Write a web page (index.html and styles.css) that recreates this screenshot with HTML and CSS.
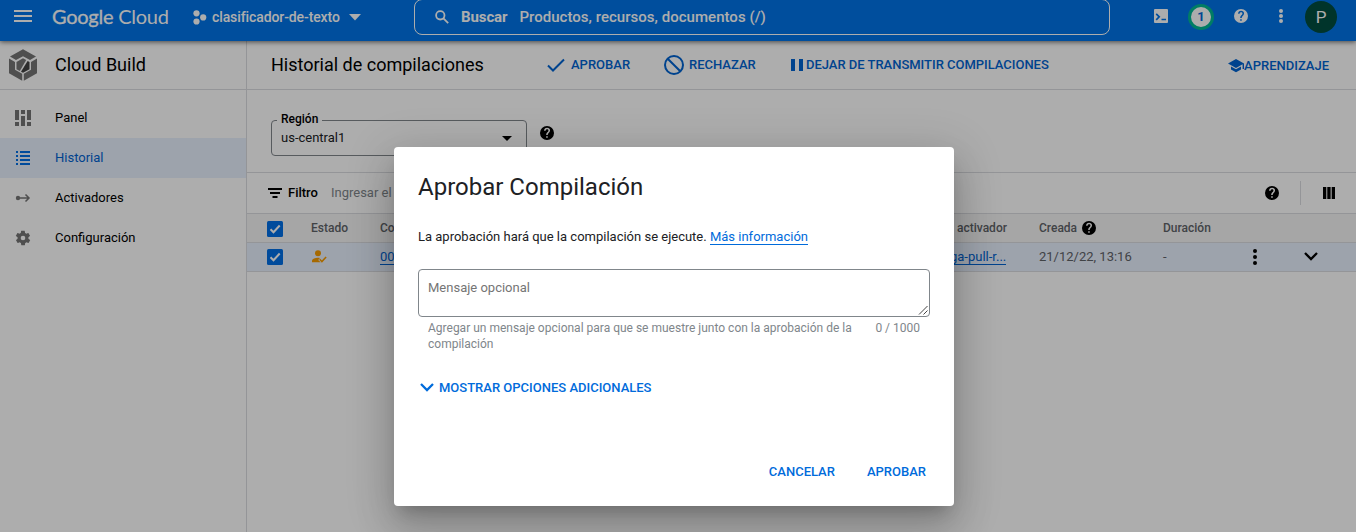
FILE: index.html
```html
<!DOCTYPE html>
<html lang="es">
<head>
<meta charset="utf-8">
<title>Cloud Build</title>
<link rel="stylesheet" href="styles.css">
</head>
<body>
<svg class="defs" width="0" height="0">
  <symbol id="help" viewBox="0 0 24 24"><path d="M12 0a12 12 0 1 0 0 24 12 12 0 0 0 0-24zm1.300 20.200h-2.700v-2.700h2.700zm2.400-9.200c-1.400 1.400-2.400 2.300-2.400 4.500h-2.700c0-3 1-4 2.600-5.400.9-.8 1.300-1.300 1.300-2.200 0-1.400-1-2.300-2.400-2.300S9.700 6.600 9.700 8.100H7c0-2.900 2.100-4.900 5.100-4.900s5.100 1.900 5.100 4.500c0 1.400-.6 2.400-1.500 3.300z"/></symbol>
  <symbol id="tick" viewBox="0 0 16 16"><rect width="16" height="16" rx="1.500" fill="#006fe6"/><path d="M3.500 8.200l3 3 6.200-6.700" fill="none" stroke="#fff" stroke-width="2"/></symbol>
  <symbol id="down" viewBox="0 0 14 9"><path d="M1 1l6 6 6-6" fill="none" stroke="currentColor" stroke-width="2.300"/></symbol>
</svg>
<div class="app">
  <header class="top">
    <svg class="menu" width="18" height="12"><path d="M0 1h18M0 6h18M0 11h18" stroke="#fff" stroke-width="2"/></svg>
    <div class="brand"><span class="g">Google</span> <span class="c">Cloud</span></div>
    <div class="project">
      <svg width="14" height="15"><g fill="#fff"><circle cx="3.500" cy="3.300" r="3.100"/><circle cx="3.500" cy="11.500" r="3.100"/><circle cx="10.200" cy="7.400" r="3.100"/></g></svg>
      <span>clasificador-de-texto</span>
      <svg class="caret" width="12" height="7"><path d="M0 0h12L6 6.500z" fill="#fff"/></svg>
    </div>
    <div class="search">
      <svg width="14" height="14" viewBox="0 0 14 14"><g fill="none" stroke="#fff" stroke-width="1.800"><circle cx="5.300" cy="5.300" r="4.200"/><path d="M8.400 8.400l4.800 4.800"/></g></svg>
      <b>Buscar</b><span>Productos, recursos, documentos (/)</span>
    </div>
    <div class="tools">
      <svg width="14" height="14"><rect width="14" height="14" rx="1" fill="#fff"/><path d="M2.200 4.800L5.200 7.800l-3 3M7.500 10.500h4.500" fill="none" stroke="#0074e8" stroke-width="1.700"/></svg>
      <span class="count">1</span>
      <svg class="h" width="14" height="14" fill="#fff"><use href="#help"/></svg>
      <svg class="dots" width="4" height="14" fill="#fff"><circle cx="2" cy="2" r="2"/><circle cx="2" cy="7" r="2"/><circle cx="2" cy="12" r="2"/></svg>
      <span class="avatar">P</span>
    </div>
  </header>
  <div class="bar">
    <div class="product">
      <svg width="28" height="32" viewBox="0 0 28 32">
        <path fill="#757575" d="M14 .2L27 7.600l-6 3.500L14 7.300l-7 3.800L1 7.600z"/>
        <path fill="#757575" d="M0 9.600l6 3.400v7.700l7.200 4.100v7L0 24.200zM28 9.600l-6 3.400v7.700l-7.200 4.100v7L28 24.200z"/>
        <path fill="#757575" d="M14 9.300l3.200 1.800-6.400 11-3.300-1.900v-7.100z"/>
        <path fill="#424242" d="M18.600 11.900l1.900 1.100v7.200L14 23.800l-2-1.100z"/>
      </svg>
      <span>Cloud Build</span>
    </div>
    <div class="page-head">
      <h1>Historial de compilaciones</h1>
      <span class="act approve"><svg width="18" height="14"><path d="M1 7.500l5 5L17 1.500" fill="none" stroke="currentColor" stroke-width="2"/></svg>APROBAR</span>
      <span class="act reject"><svg width="20" height="20"><g fill="none" stroke="currentColor" stroke-width="2"><circle cx="10" cy="10" r="9"/><path d="M3.700 3.700l12.600 12.600"/></g></svg>RECHAZAR</span>
      <span class="act stream"><svg width="12" height="12"><path d="M0 0h4v12H0zM8 0h4v12H8z" fill="currentColor"/></svg>DEJAR DE TRANSMITIR COMPILACIONES</span>
      <span class="act learn"><svg width="16" height="14" viewBox="0 0 16 14"><path d="M8 0l8 4.500V10h-1.400V5.300L8 9 0 4.500zM3 7.400l5 2.800 5-2.800v3L8 13.200 3 10.400z" fill="currentColor"/></svg>APRENDIZAJE</span>
    </div>
  </div>
  <div class="body">
    <nav class="side">
      <a><svg width="16" height="16" fill="#757575"><path d="M0 0h4v10H0zM0 12h4v4H0zM6 0h4v4H6zM6 6h4v10H6zM12 0h4v10h-4zM12 12h4v4h-4z"/></svg>Panel</a>
      <a class="on"><svg width="16" height="16" fill="#006fe6"><path d="M1 1h2v2H1zM1 5h2v2H1zM1 9h2v2H1zM1 13h2v2H1zM5 1h10v2H5zM5 5h10v2H5zM5 9h10v2H5zM5 13h10v2H5z"/></svg>Historial</a>
      <a><svg width="16" height="16"><circle cx="3" cy="8" r="2.200" fill="#757575"/><path d="M3 8h11M10.500 4.500L14 8l-3.500 3.500" fill="none" stroke="#757575" stroke-width="1.500"/></svg>Activadores</a>
      <a><svg width="16" height="16" viewBox="1 1 22 22" fill="#757575"><path d="M19.400 13c0-.3.100-.6.100-1s0-.7-.1-1l2.100-1.600c.2-.2.200-.4.100-.6l-2-3.500c-.1-.2-.4-.3-.6-.2l-2.500 1c-.5-.4-1.100-.7-1.700-1l-.4-2.600c0-.2-.2-.4-.5-.4h-4c-.2 0-.5.200-.5.400l-.4 2.600c-.6.300-1.200.6-1.700 1l-2.500-1c-.2-.1-.5 0-.6.200l-2 3.500c-.1.200-.1.500.1.600L4.600 11c0 .3-.1.700-.1 1s0 .7.100 1l-2.100 1.600c-.2.200-.2.400-.1.600l2 3.500c.1.200.4.300.6.200l2.500-1c.5.400 1.100.7 1.700 1l.4 2.600c0 .2.200.4.500.4h4c.2 0 .5-.2.500-.4l.4-2.600c.6-.3 1.200-.6 1.700-1l2.500 1c.2.100.5 0 .6-.2l2-3.500c.1-.2.100-.5-.1-.6zM12 15.200a3.200 3.200 0 1 1 0-6.400 3.200 3.200 0 0 1 0 6.400z"/></svg>Configuración</a>
    </nav>
    <main class="main">
      <div class="region">
        <div class="select"><span class="lab">Región</span><span>us-central1</span><svg width="10" height="5"><path d="M0 0h10L5 5z"/></svg></div>
        <svg width="14" height="14"><use href="#help"/></svg>
      </div>
      <div class="filter">
        <svg width="14" height="10"><path d="M0 1h14M2 5h10M4.500 9h5" stroke="#000" stroke-width="2"/></svg>
        <b>Filtro</b><span class="hint">Ingresar el</span>
        <span class="right"><svg width="14" height="14"><use href="#help"/></svg><i></i><svg width="12" height="12"><path d="M0 0h3.300v12H0zM4.300 0h3.300v12H4.300zM8.700 0H12v12H8.700z"/></svg></span>
      </div>
      <div class="row head">
        <svg width="16" height="16"><use href="#tick"/></svg><span>Estado</span><span>Co</span><span class="trig">activador</span><span class="created">Creada <svg width="14" height="14" fill="#000"><use href="#help"/></svg></span><span>Duración</span>
      </div>
      <div class="row data">
        <svg width="16" height="16"><use href="#tick"/></svg>
        <span><svg class="user" width="16" height="14"><g fill="#f59b00"><circle cx="7" cy="3.200" r="3"/><path d="M1 12.300V11c0-2.200 3.500-3.300 6-3.300.7 0 1.300.1 2 .2L7.200 10l2.400 2.300z"/></g><path d="M8.700 9.300l2.200 2.200 4.200-4.500" fill="none" stroke="#f59b00" stroke-width="1.600"/></svg></span>
        <span><u>00</u></span><span class="trig"><u>ga-pull-r...</u></span><span>21/12/22, 13:16</span><span>-</span>
        <svg class="more" width="4" height="16"><circle cx="2" cy="2" r="2"/><circle cx="2" cy="8" r="2"/><circle cx="2" cy="14" r="2"/></svg>
        <svg class="exp" width="14" height="9"><use href="#down"/></svg>
      </div>
    </main>
  </div>
</div>
<div class="backdrop">
  <section class="dialog">
    <h2>Aprobar Compilación</h2>
    <p class="lead">La aprobación hará que la compilación se ejecute. <a>Más información</a></p>
    <div class="field"><span>Mensaje opcional</span><svg width="10" height="10"><path d="M1 9.500L9.500 1M5.500 9.500l4-4" stroke="#444" stroke-width="1"/></svg></div>
    <div class="note"><span>Agregar un mensaje opcional para que se muestre junto con la aprobación de la compilación</span><span class="num">0 / 1000</span></div>
    <div class="expand"><svg width="14" height="9"><use href="#down"/></svg><span>MOSTRAR OPCIONES ADICIONALES</span></div>
    <div class="buttons"><span>CANCELAR</span><span>APROBAR</span></div>
  </section>
</div>
</body>
</html>
```
FILE: styles.css
```css
* { box-sizing: border-box; }
body { margin: 0; height: 532px; overflow: hidden; background: #fff; color: #202124; font: 13px/16px Roboto, sans-serif; }
svg { display: block; flex: none; }
.defs { position: absolute; }
.app { height: 532px; display: flex; flex-direction: column; }
.top { height: 41px; flex: none; background: #0074e8; color: #fff; display: flex; align-items: flex-start; box-shadow: 0 1px 5px rgba(0,0,0,.6); z-index: 1; }
.menu { margin: 10px 0 0 14px; }
.brand { margin: 4px 0 0 20px; width: 117px; font: 20px/25px Lato, sans-serif; white-space: nowrap; letter-spacing: -.25px; }
.brand .g { -webkit-text-stroke: .3px #fff; }
.project { margin: 9px 0 0 24px; width: 221px; display: flex; align-items: center; font-size: 14px; font-weight: 500; }
.project span { margin-left: 5px; letter-spacing: -.1px; }
.caret { margin-left: 9px; }
.search { width: 696px; height: 36px; margin-top: -1px; border: 1px solid #fff; border-radius: 8px; display: flex; align-items: center; padding-left: 20px; font-size: 15px; font-weight: 500; letter-spacing: .03px; }
.search b { margin: 0 12px 0 12px; letter-spacing: -.1px; }
.tools { display: flex; align-items: center; height: 32px; margin-left: 44px; }
.count { width: 26px; height: 26px; margin: 1px 20px 0; border: 3px solid #00b894; border-radius: 50%; background: #fff; color: #0068d8; font-weight: 700; text-align: center; line-height: 20px; }
.dots { margin: 0 22px 0 31px; }
.avatar { width: 32px; height: 32px; border-radius: 50%; background: #004d40; text-align: center; font-size: 17px; line-height: 33px; margin-top: 2px; }
.bar { height: 49px; flex: none; display: flex; border-bottom: 1px solid #dadce0; color: #000; }
.product { width: 247px; border-right: 1px solid #dadce0; display: flex; align-items: center; padding-left: 9px; font-size: 18px; gap: 18px; }
.page-head { flex: 1; display: flex; align-items: center; padding-left: 24px; }
h1 { margin: 0; font-size: 18px; font-weight: 400; width: 276px; white-space: nowrap; }
.act { display: flex; align-items: center; color: #0063d1; font-weight: 500; white-space: nowrap; }
.approve { width: 117px; gap: 6px; }
.reject { width: 127px; gap: 5px; }
.stream { gap: 3px; letter-spacing: -.02px; }
.learn { margin: 1px 27px 0 auto; }
.body { flex: 1; display: flex; min-height: 0; }
.side { width: 247px; border-right: 1px solid #dadce0; padding-top: 8px; color: #000; }
.side a { height: 40px; display: flex; align-items: center; gap: 24px; padding-left: 15px; }
.side .on { background: #e8f0fe; color: #0063d1; }
.main { flex: 1; }
.region { height: 82px; padding: 30px 0 0 24px; display: flex; gap: 13px; }
.region > svg { margin-top: 6px; }
.select { position: relative; width: 256px; height: 36px; border: 1px solid #80868b; border-radius: 4px; display: flex; align-items: center; padding: 0 14px 0 9px; justify-content: space-between; }
.lab { position: absolute; left: 5px; top: -10px; background: #fff; padding: 0 4px; font-size: 12px; font-weight: 500; color: #000; }
.filter { height: 42px; border: solid #dadce0; border-width: 1px 0; display: flex; align-items: center; padding-left: 21px; }
.filter b { font-weight: 500; color: #000; margin: 0 13px 0 6px; }
.hint { color: #80868b; }
.right { margin-left: auto; display: flex; align-items: center; padding-right: 21px; }
.right i { height: 24px; border-left: 1px solid #dadce0; margin: 0 22px 0 21px; }
.row { display: grid; grid-template-columns: 44px 69px 0 659px 124px 89px 51px 1fr; height: 29px; align-items: center; padding-left: 20px; border-bottom: 1px solid #dadce0; }
.head { background: #f5f5f5; color: #5f6368; font-size: 12px; font-weight: 500; }
.head > svg { margin-top: 2px; }
.trig { margin-left: 577px; white-space: nowrap; }
.data .trig { margin-left: 570px; }
.created { display: flex; align-items: center; gap: 5px; margin-top: -1px; }
.data { background: #e8f0fe; color: #5f6368; }
.data .more { margin-left: 1px; fill: #000; }
.exp { color: #000; margin: -2px 0 0 1px; }
.data u { color: #0063d1; text-decoration: none; border-bottom: 1px solid; }
.backdrop { position: absolute; inset: 0; background: rgba(0,0,0,.32); display: flex; z-index: 2; }
.dialog { width: 560px; height: 359px; margin: 147px 0 0 394px; padding: 24px; border-radius: 4px; background: #fff; box-shadow: 0 11px 15px -7px rgba(0,0,0,.2), 0 24px 38px 3px rgba(0,0,0,.14), 0 9px 46px 8px rgba(0,0,0,.12); }
h2 { margin: 0; font-size: 24px; line-height: 32px; font-weight: 400; }
.lead { margin: 26px 0 0; }
.lead a { color: #006bdb; border-bottom: 1px solid; }
.field { height: 48px; margin-top: 24px; border: 1px solid #80868b; border-radius: 4px; padding: 10px 1px 1px 9px; display: flex; justify-content: space-between; color: #757575; }
.field svg { align-self: flex-end; }
.note { margin: 3px 10px 0; display: flex; justify-content: space-between; font-size: 12px; color: #80868b; }
.note span:first-child { width: 430px; }
.expand { margin-top: 28px; display: flex; align-items: center; gap: 5px; color: #006bdb; font-weight: 500; padding-left: 2px; }
.expand svg { margin-top: -2px; }
.buttons { margin: 68px 4px 0; display: flex; justify-content: flex-end; gap: 32px; color: #006bdb; font-weight: 500; }
```
